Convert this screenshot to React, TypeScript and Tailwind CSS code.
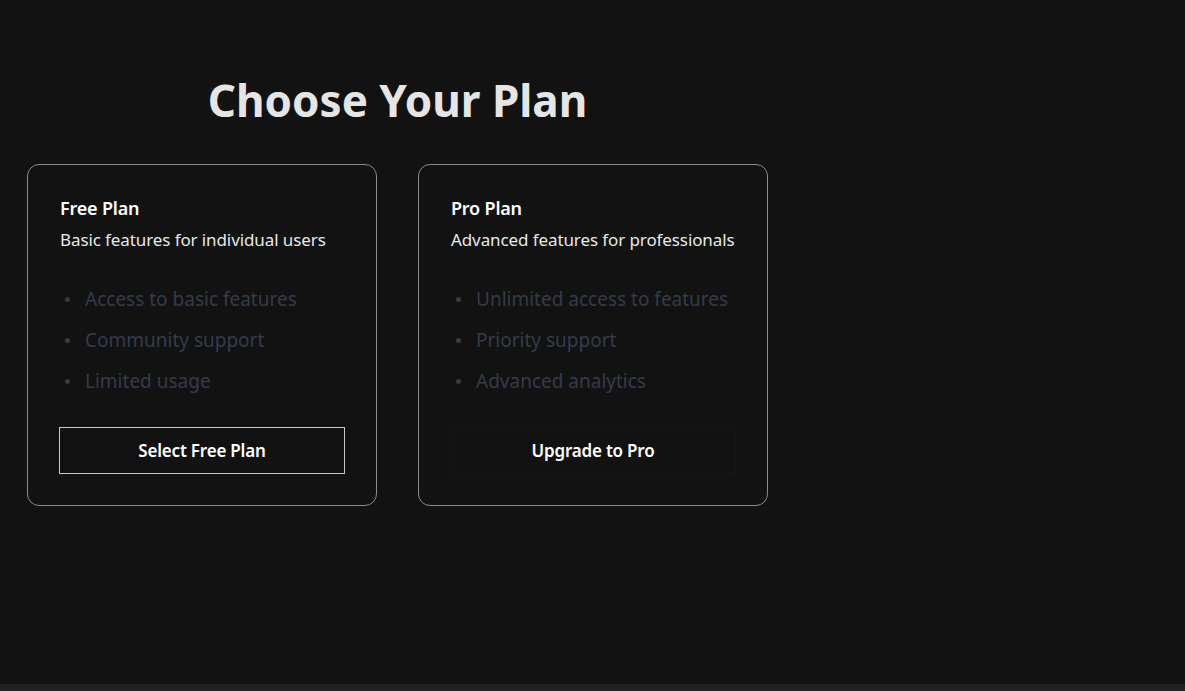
import React from "react";

const plans = [
  {
    name: "Free Plan",
    desc: "Basic features for individual users",
    features: ["Access to basic features", "Community support", "Limited usage"],
    cta: "Select Free Plan",
    outlined: true,
  },
  {
    name: "Pro Plan",
    desc: "Advanced features for professionals",
    features: ["Unlimited access to features", "Priority support", "Advanced analytics"],
    cta: "Upgrade to Pro",
    outlined: false,
  },
];

export default function App() {
  return (
    <div
      className="h-[691px] w-[1185px] bg-[#121212] flex flex-col overflow-hidden"
      style={{ fontFamily: '"Noto Sans", "Open Sans", sans-serif' }}
    >
      <div className="flex-1">
        <div className="w-[741px] ml-[27px] pt-[72px]">
          <h1 className="text-center text-[44px] leading-[56px] font-bold text-[#e5e5e5]">
            Choose Your Plan
          </h1>
          <div className="mt-[36px] flex gap-[41px]">
            {plans.map((p) => (
              <div
                key={p.name}
                className="w-[350px] h-[342px] border-[1.5px] border-[#8a8a8a] rounded-[12px] px-[31px] pt-[31px] pb-[31px] flex flex-col"
              >
                <div className="pl-[1px] text-[18px] leading-[24px] font-semibold text-white tracking-[-0.2px]">{p.name}</div>
                <div className="pl-[1px] mt-[8px] text-[17px] leading-[24px] text-[#e8e8e8] tracking-[-0.1px]">{p.desc}</div>
                <ul className="pt-[35px] flex flex-col gap-[17px]">
                  {p.features.map((f) => (
                    <li key={f} className="flex items-center text-[19px] leading-[24px] text-[#343b4a]">
                      <span className="w-[5px] h-[5px] rounded-full bg-[#343b4a] ml-[6px] mr-[15px]" />
                      {f}
                    </li>
                  ))}
                </ul>
                <div className="flex-1" />
                <button
                  className={
                    "h-[47px] w-full text-[17px] font-semibold text-white tracking-[-0.2px] " +
                    (p.outlined ? "border-[1.5px] border-[#c8c8c8]" : "border border-[#161616]")
                  }
                >
                  {p.cta}
                </button>
              </div>
            ))}
          </div>
        </div>
      </div>
      <div className="h-[7px] bg-[#212121]" />
    </div>
  );
}
